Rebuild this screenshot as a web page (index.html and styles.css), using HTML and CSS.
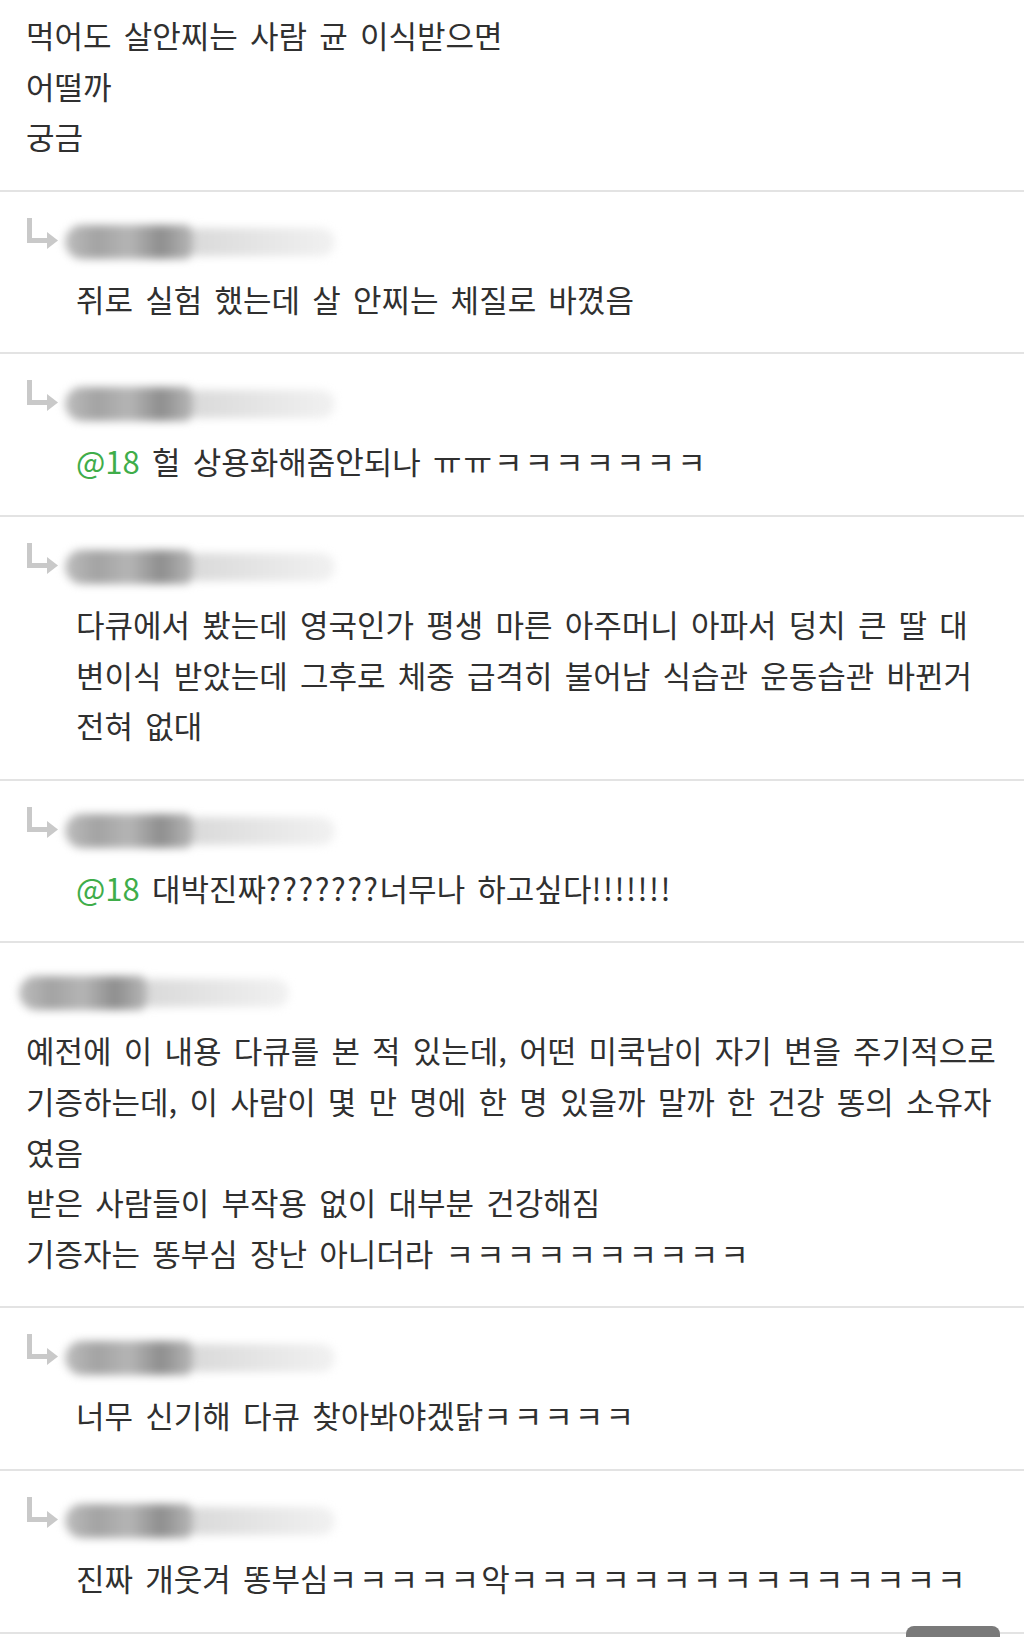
FILE: index.html
```html
<!DOCTYPE html>
<html lang="ko">
<head>
    <meta charset="UTF-8">
    <title>댓글</title>
    <!-- comment thread styles -->
    <link rel="stylesheet" href="styles.css">
</head>
<body>
    <div class="thread">
        <div class="item post">
            <p class="body">먹어도 살안찌는 사람 균 이식받으면<br>어떨까<br>궁금</p>
        </div>

        <div class="item reply">
            <div class="head">
                <svg class="arrow" viewBox="0 0 32 32"><path d="M3.5 0 V22.5 H22" /><polygon points="21,14 32,22.5 21,31" /></svg>
                <span class="nick"><i class="dark"></i><i class="light"></i></span>
            </div>
            <p class="body">쥐로 실험 했는데 살 안찌는 체질로 바꼈음</p>
        </div>

        <div class="item reply">
            <div class="head">
                <svg class="arrow" viewBox="0 0 32 32"><path d="M3.5 0 V22.5 H22" /><polygon points="21,14 32,22.5 21,31" /></svg>
                <span class="nick"><i class="dark"></i><i class="light"></i></span>
            </div>
            <p class="body"><span class="mention">@18</span> 헐 상용화해줌안되나 <span class="lol">ㅠㅠㅋㅋㅋㅋㅋㅋㅋ</span></p>
        </div>

        <div class="item reply">
            <div class="head">
                <svg class="arrow" viewBox="0 0 32 32"><path d="M3.5 0 V22.5 H22" /><polygon points="21,14 32,22.5 21,31" /></svg>
                <span class="nick"><i class="dark"></i><i class="light"></i></span>
            </div>
            <p class="body">다큐에서 봤는데 영국인가 평생 마른 아주머니 아파서 덩치 큰 딸 대<br>변이식 받았는데 그후로 체중 급격히 불어남 식습관 운동습관 바뀐거<br>전혀 없대</p>
        </div>

        <div class="item reply">
            <div class="head">
                <svg class="arrow" viewBox="0 0 32 32"><path d="M3.5 0 V22.5 H22" /><polygon points="21,14 32,22.5 21,31" /></svg>
                <span class="nick"><i class="dark"></i><i class="light"></i></span>
            </div>
            <p class="body"><span class="mention">@18</span> 대박진짜<span class="marks">???????</span>너무나 하고싶다<span class="marks">!!!!!!!</span></p>
        </div>

        <div class="item comment">
            <div class="head">
                <span class="nick"><i class="dark"></i><i class="light"></i></span>
            </div>
            <p class="body">예전에 이 내용 다큐를 본 적 있는데, 어떤 미쿡남이 자기 변을 주기적으로<br>기증하는데, 이 사람이 몇 만 명에 한 명 있을까 말까 한 건강 똥의 소유자<br>였음<br>받은 사람들이 부작용 없이 대부분 건강해짐<br>기증자는 똥부심 장난 아니더라 <span class="lol">ㅋㅋㅋㅋㅋㅋㅋㅋㅋㅋ</span></p>
        </div>

        <div class="item reply">
            <div class="head">
                <svg class="arrow" viewBox="0 0 32 32"><path d="M3.5 0 V22.5 H22" /><polygon points="21,14 32,22.5 21,31" /></svg>
                <span class="nick"><i class="dark"></i><i class="light"></i></span>
            </div>
            <p class="body">너무 신기해 다큐 찾아봐야겠닭<span class="lol">ㅋㅋㅋㅋㅋ</span></p>
        </div>

        <div class="item reply">
            <div class="head">
                <svg class="arrow" viewBox="0 0 32 32"><path d="M3.5 0 V22.5 H22" /><polygon points="21,14 32,22.5 21,31" /></svg>
                <span class="nick"><i class="dark"></i><i class="light"></i></span>
            </div>
            <p class="body">진짜 개웃겨 똥부심<span class="lol">ㅋㅋㅋㅋㅋ</span>악<span class="lol">ㅋㅋㅋㅋㅋㅋㅋㅋㅋㅋㅋㅋㅋㅋㅋ</span></p>
        </div>
    </div>

    <div class="tab"></div>
</body>
</html>
```

FILE: styles.css
```css
body {
    margin: 0;
    background-color: #FFFFFF;
    font-family: "Noto Sans CJK KR", "Noto Sans", sans-serif;
    color: #303030;
}
.thread {
    display: flex;
    flex-direction: column;
}
.item {
    border-bottom: 2px solid #E3E3E3;
    padding: 28px 10px 28px 26px;
}
.post {
    padding-top: 10px;
}
.body {
    margin: 0;
    font-size: 31px;
    line-height: 50.6px;
    word-spacing: 3.5px;
    white-space: nowrap;
}
.reply .body {
    padding-left: 50px;
}
.mention {
    color: #3FAD4A;
}
/* jamo and punctuation run a little wider in the original font */
.lol {
    letter-spacing: 2px;
}
.marks {
    letter-spacing: 1.5px;
}
.head {
    display: flex;
    align-items: center;
    height: 44px;
    margin-bottom: 10px;
}
.arrow {
    width: 32px;
    height: 32px;
    align-self: flex-start;
    margin-top: -2px;
    margin-right: 7px;
    flex: none;
}
.arrow path {
    fill: none;
    stroke: #C9C9C9;
    stroke-width: 5;
}
.arrow polygon {
    fill: #C9C9C9;
}
.nick {
    display: flex;
    align-items: center;
    height: 38px;
    filter: blur(4px);
}
.comment .nick {
    margin-left: -7px;
}
.nick i {
    display: block;
    height: 34px;
}
.nick .dark {
    width: 128px;
    border-radius: 17px 8px 8px 17px;
    background: linear-gradient(90deg, #BDBDBD, #A3A3A3 25%, #B5B5B5 50%, #8E8E8E 75%, #B8B8B8);
}
.nick .light {
    width: 142px;
    height: 28px;
    border-radius: 4px 14px 14px 4px;
    background: linear-gradient(90deg, #DADADA, #E8E8E8 60%, #F1F1F1);
}
.tab {
    position: fixed;
    right: 24px;
    bottom: 0;
    width: 94px;
    height: 11px;
    border-radius: 8px 8px 0 0;
    background-color: #7A7A7A;
}
```
